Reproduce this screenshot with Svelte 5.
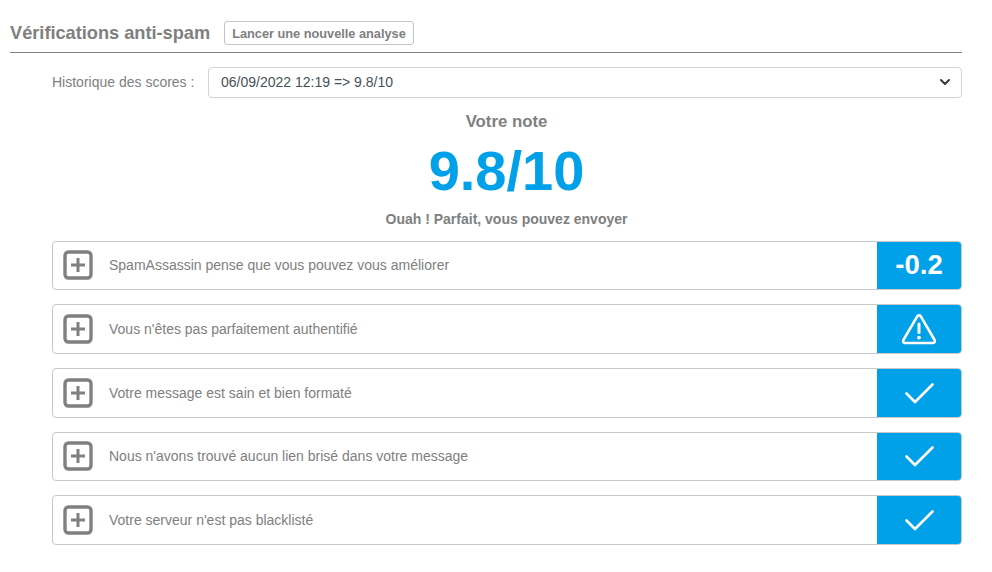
<script>
  const rows = [
    { text: 'SpamAssassin pense que vous pouvez vous améliorer', kind: 'score' },
    { text: "Vous n'êtes pas parfaitement authentifié", kind: 'warn' },
    { text: 'Votre message est sain et bien formaté', kind: 'ok' },
    { text: "Nous n'avons trouvé aucun lien brisé dans votre message", kind: 'ok' },
    { text: "Votre serveur n'est pas blacklisté", kind: 'ok' }
  ];
</script>

<main class="page">
  <header class="head">
    <h2>Vérifications anti-spam</h2>
    <button class="run">Lancer une nouvelle analyse</button>
  </header>

  <div class="body">
    <div class="history">
      <span class="hist-label">Historique des scores :</span>
      <div class="select">
        <span>06/09/2022 12:19 =&gt; 9.8/10</span>
        <svg width="12" height="8" viewBox="0 0 12 8"><path d="M2 2l4 4 4-4" fill="none" stroke="#343a40" stroke-width="2" stroke-linecap="round" stroke-linejoin="round"/></svg>
      </div>
    </div>

    <div class="summary">
      <div class="note">Votre note</div>
      <div class="score">9.8/10</div>
      <div class="msg">Ouah ! Parfait, vous pouvez envoyer</div>
    </div>

    <div class="rows">
      {#each rows as r}
        <div class="row">
          <svg class="plus" width="30" height="30" viewBox="0 0 30 30">
            <rect x="2" y="2" width="26" height="26" rx="3.5" fill="none" stroke="#808080" stroke-width="3.4"/>
            <path d="M15 8v14M8 15h14" stroke="#808080" stroke-width="3" fill="none"/>
          </svg>
          <span class="text">{r.text}</span>
          <div class="badge">
            {#if r.kind === 'score'}
              <span class="val">-0.2</span>
            {:else if r.kind === 'warn'}
              <svg width="36" height="32" viewBox="0 0 36 32">
                <path d="M16.2 3.4 Q18 1.4 19.8 3.4 L33.6 27 Q34.6 30 32 30 H4 Q1.4 30 2.4 27 Z" fill="none" stroke="#fff" stroke-width="2.6" stroke-linejoin="round"/>
                <path d="M18 11v8.5" stroke="#fff" stroke-width="3" stroke-linecap="round"/>
                <circle cx="18" cy="24.6" r="1.9" fill="#fff"/>
              </svg>
            {:else}
              <svg width="32" height="24" viewBox="0 0 32 24">
                <path d="M3.5 12.5 L12 21 L29.5 3.5" fill="none" stroke="#fff" stroke-width="2.6" stroke-linecap="round" stroke-linejoin="round"/>
              </svg>
            {/if}
          </div>
        </div>
      {/each}
    </div>
  </div>
</main>

<style>
  :global(body) {
    margin: 0;
    background: #fff;
    font-family: "Liberation Sans", Arial, sans-serif;
    color: #808080;
  }
  .page {
    width: 952px;
    margin-left: 10px;
    padding-top: 21px;
  }
  .head {
    display: flex;
    align-items: flex-start;
    gap: 14px;
    height: 31px;
    border-bottom: 1px solid #808080;
  }
  h2 {
    margin: 0;
    font-size: 18.2px;
    line-height: 24px;
    font-weight: 700;
    color: #808080;
  }
  .run {
    box-sizing: border-box;
    height: 24px;
    padding: 0 7px;
    font: 700 12.75px "Liberation Sans", Arial, sans-serif;
    color: #808080;
    background: #fff;
    border: 1px solid #c4c4c4;
    border-radius: 3px;
  }
  .body {
    padding-left: 42px;
  }
  .history {
    display: flex;
    align-items: center;
    margin-top: 14px;
  }
  .hist-label {
    width: 156px;
    font-size: 14px;
    color: #808080;
    padding-bottom: 1px;
  }
  .select {
    box-sizing: border-box;
    flex: 1;
    height: 31px;
    display: flex;
    align-items: center;
    justify-content: space-between;
    padding: 0 10px 1px 12px;
    border: 1px solid #ced4da;
    border-radius: 4px;
    font-size: 14px;
    color: #495057;
  }
  .summary {
    text-align: center;
    font-weight: 700;
    margin-left: -1px;
  }
  .note {
    margin-top: 14px;
    font-size: 16.8px;
    line-height: 20px;
  }
  .score {
    margin-top: 7px;
    font-size: 56px;
    line-height: 64px;
    color: #00a1e9;
  }
  .msg {
    margin-top: 7px;
    font-size: 14px;
    line-height: 18px;
  }
  .rows {
    display: flex;
    flex-direction: column;
    gap: 14.1px;
    margin-top: 12.6px;
  }
  .row {
    box-sizing: border-box;
    height: 49.6px;
    display: flex;
    align-items: center;
    border: 1px solid #c8c8c8;
    border-radius: 4px;
    padding-left: 10px;
    overflow: hidden;
  }
  .plus {
    flex: none;
  }
  .text {
    flex: 1;
    margin-left: 16px;
    font-size: 14px;
    color: #808080;
  }
  .badge {
    flex: none;
    width: 84px;
    align-self: stretch;
    display: flex;
    align-items: center;
    justify-content: center;
    background: #00a1e9;
    color: #fff;
  }
  .val {
    font-size: 27.5px;
    font-weight: 700;
  }
</style>
